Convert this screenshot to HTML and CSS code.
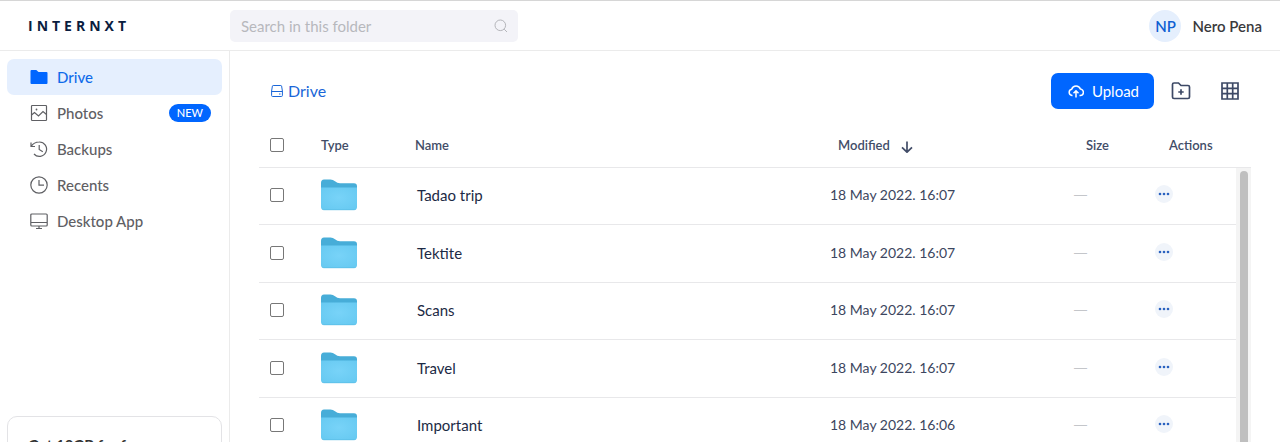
FILE: index.html
```html
<!DOCTYPE html>
<html lang="en">
	<head>
		<meta charset="UTF-8">
		<meta name="viewport" content="width=device-width,initial-scale=1">
		<title>Internxt Drive</title>
		<link rel="stylesheet" href="styles.css">
	</head>
	<body>

		<!-- shared shapes -->
		<svg class="sprite" aria-hidden="true">
			<defs>
				<radialGradient id="folderFront" cx=".5" cy=".45" r=".7">
					<stop offset="0" stop-color="#78d3f8"/>
					<stop offset="1" stop-color="#66c9f1"/>
				</radialGradient>
			</defs>
			<symbol id="folder" viewBox="0 0 36 32">
				<path fill="#47add8" d="M0 4Q0 .5 3 .5h6.500q2.500 0 4.500 1.800 2.200 1.900 5 1.900H33q3 0 3 3V15H0z"/>
				<path fill="url(#folderFront)" d="M0 8.500h36V28q0 3-3 3H3q-3 0-3-3z"/>
				<path fill="none" stroke="#55b9e2" stroke-width=".6" d="M1 30q.8.800 2 .8h30q1.200 0 2-.8"/>
			</symbol>
			<symbol id="dots" viewBox="0 0 12 4">
				<circle cx="2" cy="2" r="1.300"/>
				<circle cx="6" cy="2" r="1.300"/>
				<circle cx="10" cy="2" r="1.300"/>
			</symbol>
		</svg>

		<div class="app">
			<header class="header">
				<a class="logo" href="#">INTERNXT</a>
				<form class="search">
					<input type="text" placeholder="Search in this folder" aria-label="Search in this folder">
					<svg width="14" height="14" viewBox="0 0 14 14"><circle cx="6.300" cy="6.300" r="5.300"/><path d="M10.200 10.200L13 13"/></svg>
				</form>
				<a class="account" href="#">
					<span class="avatar">NP</span>
					<span>Nero Pena</span>
				</a>
			</header>

			<div class="body">
				<aside class="sidebar">
					<nav class="nav">
						<a class="active" href="#">
							<svg width="18" height="18" viewBox="0 0 18 18"><path class="solid" d="M.5 3q0-1 1-1h4.800l2.200 2H16.500q1 0 1 1v10q0 1-1 1h-15q-1 0-1-1z"/></svg>
							Drive
						</a>
						<a href="#">
							<svg width="18" height="18" viewBox="0 0 18 18"><rect x="1.500" y="1.500" width="15" height="15" rx=".8"/><path d="M1.500 11l3-2.500 4 3.500 4.500-4.500 3.500 3"/><circle class="solid" cx="6.500" cy="5.500" r=".9"/></svg>
							Photos
							<span class="badge">NEW</span>
						</a>
						<a href="#">
							<svg width="18" height="18" viewBox="0 0 18 18"><path d="M1 2.500v4h4M1.300 6.300C3 3.500 5.500 2 9.200 2a7.200 7.200 0 1 1-5.200 12M9.200 5v4.500l3.600 2.200"/></svg>
							Backups
						</a>
						<a href="#">
							<svg width="18" height="18" viewBox="0 0 18 18"><circle cx="9" cy="9" r="8.200"/><path d="M9 4v5.200h5"/></svg>
							Recents
						</a>
						<a href="#">
							<svg width="18" height="18" viewBox="0 0 18 18"><rect x=".8" y="2" width="16.400" height="12" rx="1"/><path d="M1 10.500h16M9 14v2.500M6 16.500h6"/></svg>
							Desktop App
						</a>
					</nav>
					<section class="promo">
						<strong>Get 10GB for free</strong>
					</section>
				</aside>

				<main class="main">
					<div class="toolbar">
						<a class="crumb" href="#">
							<svg width="12" height="14" viewBox="0 0 12 14"><path d="M2.200 1.500h7.600q.6 0 .8.600L11.400 7v4.500q0 1-1 1H1.600q-1 0-1-1V7l.8-4.900q.2-.6.800-.6zM.6 7.500h10.800M8 10h1.500"/></svg>
							Drive
						</a>
						<button class="upload" type="button">
							<svg width="16" height="14" viewBox="0 0 16 14"><path d="M4.500 11.500H4A3.200 3.200 0 0 1 3.700 5.200 4.600 4.600 0 0 1 12.400 5.100a3.200 3.200 0 0 1-.4 6.400h-.5M8 13.500V7.200M5.500 9.200L8 6.800l2.500 2.400"/></svg>
							Upload
						</button>
						<button class="tool" type="button" aria-label="New folder">
							<svg width="20" height="18" viewBox="0 0 20 18"><path d="M1.500 2.500q0-1.500 1.500-1.500h4.500l2.500 2.500H17q1.500 0 1.500 1.500v10q0 1.500-1.500 1.500H3q-1.500 0-1.500-1.500zM10 7.300v5.400M7.300 10h5.400"/></svg>
						</button>
						<button class="tool" type="button" aria-label="Grid view">
							<svg width="18" height="18" viewBox="0 0 18 18"><path d="M1 1h16v16H1zM1 6.300h16M1 11.700h16M6.300 1v16M11.700 1v16"/></svg>
						</button>
					</div>

					<div class="list">
						<table class="files">
							<thead>
								<tr>
									<th class="check"><input type="checkbox" aria-label="Select all"></th>
									<th class="type">Type</th>
									<th class="name">Name</th>
									<th class="modified">Modified
										<svg width="12" height="12" viewBox="0 0 12 12"><path d="M6 .5v10.500M1 6.300l5 4.900 5-4.900"/></svg>
									</th>
									<th class="size">Size</th>
									<th class="actions">Actions</th>
								</tr>
							</thead>
							<tbody>
								<tr>
									<td><input type="checkbox" aria-label="Select Tadao trip"></td>
									<td><svg class="folder" width="36" height="32"><use href="#folder"/></svg></td>
									<td class="name">Tadao trip</td>
									<td class="date">18 May 2022. 16:07</td>
									<td class="empty">—</td>
									<td><button class="more" type="button" aria-label="More actions"><svg width="12" height="4"><use href="#dots"/></svg></button></td>
								</tr>
								<tr>
									<td><input type="checkbox" aria-label="Select Tektite"></td>
									<td><svg class="folder" width="36" height="32"><use href="#folder"/></svg></td>
									<td class="name">Tektite</td>
									<td class="date">18 May 2022. 16:07</td>
									<td class="empty">—</td>
									<td><button class="more" type="button" aria-label="More actions"><svg width="12" height="4"><use href="#dots"/></svg></button></td>
								</tr>
								<tr>
									<td><input type="checkbox" aria-label="Select Scans"></td>
									<td><svg class="folder" width="36" height="32"><use href="#folder"/></svg></td>
									<td class="name">Scans</td>
									<td class="date">18 May 2022. 16:07</td>
									<td class="empty">—</td>
									<td><button class="more" type="button" aria-label="More actions"><svg width="12" height="4"><use href="#dots"/></svg></button></td>
								</tr>
								<tr>
									<td><input type="checkbox" aria-label="Select Travel"></td>
									<td><svg class="folder" width="36" height="32"><use href="#folder"/></svg></td>
									<td class="name">Travel</td>
									<td class="date">18 May 2022. 16:07</td>
									<td class="empty">—</td>
									<td><button class="more" type="button" aria-label="More actions"><svg width="12" height="4"><use href="#dots"/></svg></button></td>
								</tr>
								<tr>
									<td><input type="checkbox" aria-label="Select Important"></td>
									<td><svg class="folder" width="36" height="32"><use href="#folder"/></svg></td>
									<td class="name">Important</td>
									<td class="date">18 May 2022. 16:06</td>
									<td class="empty">—</td>
									<td><button class="more" type="button" aria-label="More actions"><svg width="12" height="4"><use href="#dots"/></svg></button></td>
								</tr>
							</tbody>
						</table>
						<div class="scrollbar">
							<div class="track"><div class="thumb"></div></div>
						</div>
					</div>
				</main>
			</div>
		</div>

	</body>
</html>
```

FILE: styles.css
```css
*{
	margin:0;
	padding:0;
	box-sizing: border-box;
}

body{
	font-family: Lato, "Open Sans", sans-serif;
	font-size: 15px;
	line-height: 20px;
	color:#1c2a45;
	background: #fff;
}
a{
	color: inherit;
	text-decoration: none;
}
button, input{
	font: inherit;
	border: 0;
}
svg{
	flex: none;
	fill: none;
	stroke: currentColor;
}
.sprite{
	display: block;
	width: 0;
	height: 0;
}
.sprite symbol{
	stroke: none;
}

.app{
	height: 100vh;
	display: flex;
	flex-direction: column;
	overflow: hidden;
}

/* header */
.header{
	flex: none;
	height: 51px;
	display: flex;
	align-items: center;
	padding-right: 18px;
	border-top: 1px solid #d6d6d6;
	border-bottom: 1px solid #ebebeb;
}
.logo{
	width: 230px;
	padding-left: 28px;
	font-family: "Open Sans", sans-serif;
	font-size: 14px;
	font-weight: 700;
	letter-spacing: 4px;
	color:#0b1d3f;
}
.search{
	width: 288px;
	height: 32px;
	display: flex;
	align-items: center;
	padding: 0 10px 0 11px;
	border-radius: 5px;
	background: #f3f3f8;
	color:#b4b5ba;
}
.search input{
	flex: 1;
	min-width: 0;
	background: none;
	outline: none;
}
.search input::placeholder{
	color:#b7b8bd;
}
.account{
	margin-left: auto;
	display: flex;
	align-items: center;
	gap: 11px;
	font-weight: 600;
	color:#3a3a3c;
}
.avatar{
	width: 32px;
	height: 32px;
	line-height: 32px;
	text-align: center;
	border-radius: 50%;
	background: #e5effd;
	color:#0f5fd2;
}

.body{
	flex: 1;
	min-height: 0;
	display: flex;
}

/* sidebar */
.sidebar{
	flex: none;
	width: 230px;
	padding: 8px 7px;
	border-right: 1px solid #ebebeb;
}
.nav{
	padding-bottom: 177px;
}
.nav a{
	height: 36px;
	display: flex;
	align-items: center;
	gap: 9px;
	padding: 0 11px 1px 23px;
	border-radius: 7px;
	font-weight: 500;
	color:#5f6064;
}
.nav svg{
	stroke-width: 1.2;
}
.nav .active{
	background: #e5effe;
	color:#0f6bea;
}
.nav .solid{
	fill: currentColor;
	stroke: none;
}
.nav .active .solid{
	fill: #0066ff;
}
.badge{
	margin-left: auto;
	padding: 0 8px;
	line-height: 18px;
	font-size: 11px;
	border-radius: 9px;
	background: #0066ff;
	color:#fff;
}
.promo{
	padding: 18px 20px;
	border: 1px solid #e3e3e6;
	border-radius: 10px;
	color:#333;
}

/* main */
.main{
	flex: 1;
	min-width: 0;
	display: flex;
	flex-direction: column;
	padding: 22px 29px 0;
}
.toolbar{
	flex: none;
	display: flex;
	align-items: center;
	padding: 0 2px 0 12px;
	margin-bottom: 14px;
}
.crumb{
	display: flex;
	align-items: center;
	gap: 5px;
	margin-right: auto;
	font-size: 16px;
	color:#1a66d8;
}
.upload{
	height: 36px;
	display: flex;
	align-items: center;
	gap: 8px;
	padding: 0 15px 1px 17px;
	margin-right: 8px;
	border-radius: 7px;
	background: #0066ff;
	color:#fff;
}
.upload svg{
	stroke-width: 1.5;
}
.tool{
	height: 36px;
	width: 38px;
	display: flex;
	align-items: center;
	justify-content: center;
	background: none;
	color:#3d4966;
}
.tool + .tool{
	margin-left: 11px;
}
.tool svg{
	stroke-width: 1.7;
}

.list{
	flex: 1;
	min-height: 0;
	display: flex;
	overflow: hidden;
}
.files{
	flex: 1;
	min-width: 0;
	align-self: flex-start;
	table-layout: fixed;
	border-spacing: 0;
	text-align: left;
}
.files th{
	height: 45px;
	font-size: 13px;
	font-weight: 600;
	color:#424d68;
	border-bottom: 1px solid #e8e8ea;
}
.files td{
	height: 57px;
	padding-bottom: 2px;
	border-bottom: 1px solid #e8e8ea;
}
.files tr:nth-child(even) td{
	height: 58px;
}
.files .check{
	width: 62px;
}
.files .type{
	width: 94px;
}
.files .modified{
	width: 244px;
	padding-left: 8px;
}
.files .modified svg{
	margin-left: 8px;
	vertical-align: middle;
	stroke-width: 1.7;
}
.files .size{
	width: 81px;
	padding-left: 12px;
}
.files .actions{
	width: 81px;
	padding-left: 14px;
}
.files td.name{
	padding-left: 2px;
}
.files .date{
	font-size: 14px;
	color:#3c4660;
}
.files .empty{
	font-family: "Liberation Sans", sans-serif;
	font-size: 13px;
	color:#c4c6ca;
}
.files input{
	appearance: none;
	display: block;
	width: 14px;
	height: 14px;
	margin-left: 11px;
	border: 1px solid #777;
	border-radius: 2px;
	background: #fff;
}
.folder{
	display: block;
	stroke: none;
}
.more{
	display: flex;
	align-items: center;
	justify-content: center;
	width: 18px;
	height: 18px;
	margin-bottom: 2px;
	border-radius: 50%;
	background: #f0f4fa;
}
.more svg{
	fill: #2a62c0;
	stroke: none;
}

.scrollbar{
	flex: none;
	width: 15px;
	display: flex;
	flex-direction: column;
	padding-top: 44px;
}
.track{
	flex: 1;
	padding: 3px 3px 0 4px;
	border-top: 1px solid #e8e8ea;
	background: #f4f4f4;
}
.thumb{
	height: 100%;
	border-radius: 4px 4px 0 0;
	background: #bfbfbf;
}
```
